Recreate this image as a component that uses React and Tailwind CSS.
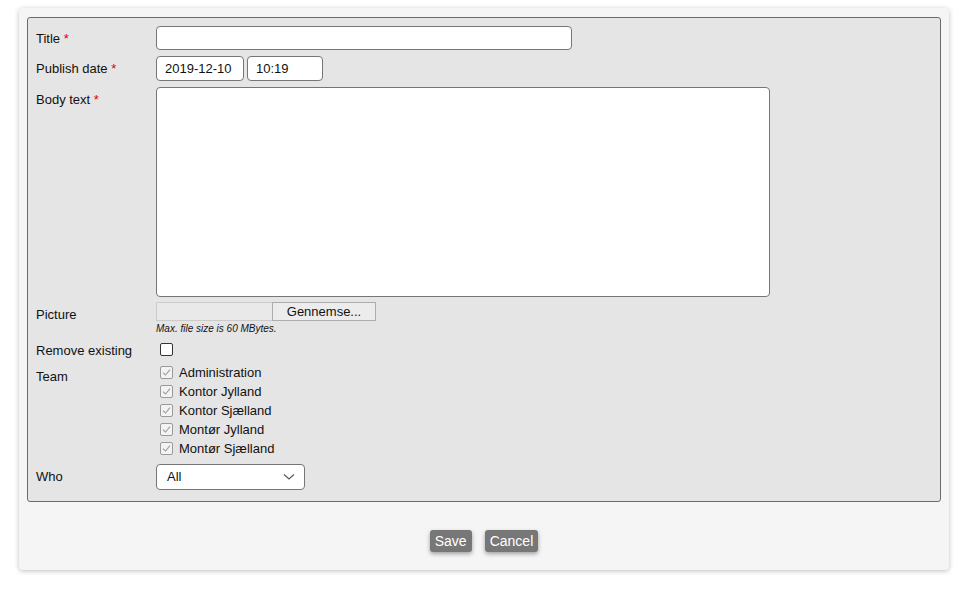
const teams = ['Administration', 'Kontor Jylland', 'Kontor Sjælland', 'Montør Jylland', 'Montør Sjælland'];

const Req = () => <span className="text-[#e00000]"> *</span>;

const Row = ({ label, required, className = '', children }) => (
    <div className={`flex ${className}`}>
        <div className="w-[120px] shrink-0 pt-[5px] leading-[15px]">
            {label}
            {required && <Req />}
        </div>
        <div className="flex-1">{children}</div>
    </div>
);

const CheckMark = () => (
    <span className="w-[13px] h-[13px] border border-[#9a9a9a] bg-[#f3f3f3] rounded-[2px] flex items-center justify-center">
        <svg width="9" height="9" viewBox="0 0 9 9">
            <path d="M1 4.6 L3.5 7 L8 1.6" fill="none" stroke="#9d9d9d" strokeWidth="1.1" />
        </svg>
    </span>
);

export default function App() {
    return (
        <div className="min-h-screen bg-white pt-[8px] pl-[19px]" style={{ fontFamily: '"Liberation Sans", Arial, sans-serif' }}>
            <div className="w-[930px] bg-[#f5f5f5] rounded-[4px] shadow-[0_1px_5px_rgba(0,0,0,0.25)] pt-[9px] px-[8px] pb-[18px] text-[13px] text-[#111]">
                {/* Form fieldset */}
                <div className="border border-[#6b6b6b] rounded-[3px] bg-[#e5e5e5] pt-[8px] pb-[11px] pl-[8px]">
                    <Row label="Title" required>
                        <input readOnly className="w-[416px] h-[24px] bg-white border border-[#767676] rounded-[4px] outline-none" />
                    </Row>

                    <Row label="Publish date" required className="mt-[6px]">
                        <div className="flex gap-[3px]">
                            <input readOnly value="2019-12-10" className="w-[88px] h-[25px] bg-white border border-[#767676] rounded-[4px] pl-[8px] text-[13px] outline-none" />
                            <input readOnly value="10:19" className="w-[76px] h-[25px] bg-white border border-[#767676] rounded-[4px] pl-[8px] text-[13px] outline-none" />
                        </div>
                    </Row>

                    <Row label="Body text" required className="mt-[6px]">
                        <textarea readOnly className="block w-[614px] h-[210px] bg-white border border-[#767676] rounded-[4px] resize-none outline-none" />
                    </Row>

                    <Row label="Picture" className="mt-[5px]">
                        <div className="flex h-[19px]">
                            <div className="w-[116px] border border-[#cbcbcb] border-r-0 bg-[#e9e9e9]" />
                            <div className="w-[104px] border border-[#adadad] bg-[#ececec] flex items-center justify-center leading-none">Gennemse...</div>
                        </div>
                        <div className="text-[10px] italic leading-[13px] mt-[1px]">Max. file size is 60 MBytes.</div>
                    </Row>

                    <Row label="Remove existing" className="mt-[3px]">
                        <div className="pt-[5px] pb-[3px] pl-[4px]">
                            <span className="block w-[13px] h-[13px] border border-[#333] bg-white rounded-[2px]" />
                        </div>
                    </Row>

                    <Row label="Team" className="mt-[5px]">
                        <div className="flex flex-col -mt-[1px]">
                            {teams.map(t => (
                                <div key={t} className="h-[19px] flex items-center gap-[6px] pl-[4px]">
                                    <CheckMark />
                                    <span>{t}</span>
                                </div>
                            ))}
                        </div>
                    </Row>

                    <Row label="Who" className="mt-[6px]">
                        <div className="w-[149px] h-[26px] bg-white border border-[#767676] rounded-[4px] flex items-center justify-between pl-[10px] pr-[9px]">
                            <span>All</span>
                            <svg width="12" height="8" viewBox="0 0 12 8">
                                <path d="M1 1.5 L6 6 L11 1.5" fill="none" stroke="#555" strokeWidth="1.1" />
                            </svg>
                        </div>
                    </Row>
                </div>

                {/* Buttons */}
                <div className="flex justify-center gap-[13px] pt-[28px]">
                    <button className="h-[22px] px-[5px] bg-[#777] text-white text-[14px] rounded-[3px] shadow-[0_2px_4px_rgba(0,0,0,0.35)] leading-none">Save</button>
                    <button className="h-[22px] px-[5px] bg-[#777] text-white text-[14px] rounded-[3px] shadow-[0_2px_4px_rgba(0,0,0,0.35)] leading-none">Cancel</button>
                </div>
            </div>
        </div>
    );
}
